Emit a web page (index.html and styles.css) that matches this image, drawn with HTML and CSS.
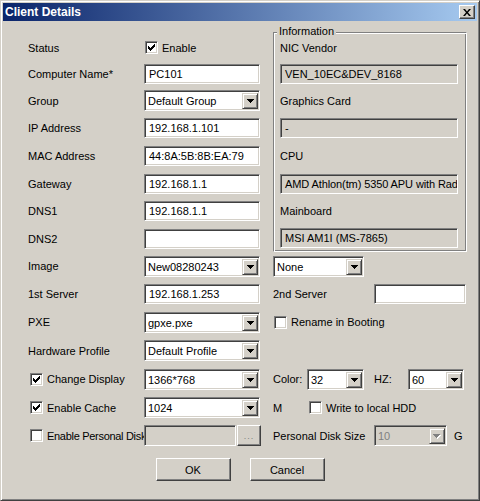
FILE: index.html
```html
<!DOCTYPE html>
<html>
<head>
<meta charset="utf-8">
<link rel="stylesheet" href="styles.css">
</head>
<body>
<div class="window">
  <div class="titlebar">
    <span class="title">Client Details</span>
    <span class="close"><svg width="8" height="7" viewBox="0 0 8 7"><path d="M0 0h2l2 2.5 2-2.5h2l-3 3.5 3 3.5h-2l-2-2.5-2 2.5h-2l3-3.5z" fill="#000"/></svg></span>
  </div>
  <div class="form">
    <!-- row 1 -->
    <div class="label">Status</div>
    <div class="check"><span class="cb on"></span>Enable</div>
    <div class="info">
      <span class="legend">Information</span>
      <div class="ilabel">NIC Vendor</div>
      <div class="field ro wide">VEN_10EC&amp;DEV_8168</div>
      <div class="ilabel">Graphics Card</div>
      <div class="field ro wide">-</div>
      <div class="ilabel">CPU</div>
      <div class="field ro wide tight">AMD Athlon(tm) 5350 APU with Rad</div>
      <div class="ilabel">Mainboard</div>
      <div class="field ro wide">MSI AM1I (MS-7865)</div>
    </div>
    <!-- row 2 -->
    <div class="label">Computer Name*</div>
    <div class="field">PC101</div>
    <!-- row 3 -->
    <div class="label">Group</div>
    <div class="select"><span class="val">Default Group</span><span class="btn"></span></div>
    <!-- row 4 -->
    <div class="label">IP Address</div>
    <div class="field">192.168.1.101</div>
    <!-- row 5 -->
    <div class="label">MAC Address</div>
    <div class="field">44:8A:5B:8B:EA:79</div>
    <!-- row 6 -->
    <div class="label">Gateway</div>
    <div class="field">192.168.1.1</div>
    <!-- row 7 -->
    <div class="label">DNS1</div>
    <div class="field">192.168.1.1</div>
    <!-- row 8 -->
    <div class="label">DNS2</div>
    <div class="field"></div>
    <!-- row 9 -->
    <div class="label">Image</div>
    <div class="select"><span class="val">New08280243</span><span class="btn"></span></div>
    <div class="right"><div class="select w91"><span class="val">None</span><span class="btn"></span></div></div>
    <!-- row 10 -->
    <div class="label">1st Server</div>
    <div class="field">192.168.1.253</div>
    <div class="right"><span class="rl w101">2nd Server</span><div class="field w92"></div></div>
    <!-- row 11 -->
    <div class="label">PXE</div>
    <div class="select"><span class="val">gpxe.pxe</span><span class="btn"></span></div>
    <div class="right"><div class="check"><span class="cb"></span>Rename in Booting</div></div>
    <!-- row 12 -->
    <div class="label">Hardware Profile</div>
    <div class="select"><span class="val">Default Profile</span><span class="btn"></span></div>
    <div class="right"></div>
    <!-- row 13 -->
    <div class="check lcheck"><span class="cb on"></span>Change Display</div>
    <div class="select"><span class="val">1366*768</span><span class="btn"></span></div>
    <div class="right">
      <span class="rl w34">Color:</span>
      <div class="select w57"><span class="val">32</span><span class="btn"></span></div>
      <span class="rl w44 hz">HZ:</span>
      <div class="select w56"><span class="val">60</span><span class="btn"></span></div>
    </div>
    <!-- row 14 -->
    <div class="check lcheck"><span class="cb on"></span>Enable Cache</div>
    <div class="select"><span class="val">1024</span><span class="btn"></span></div>
    <div class="right"><span class="rl w35">M</span><div class="check"><span class="cb"></span>Write to local HDD</div></div>
    <!-- row 15 -->
    <div class="check lcheck clip"><span class="cb"></span><span class="narrow">Enable Personal Disk</span></div>
    <div class="pdisk"><div class="field dis w92"></div><span class="dots">...</span></div>
    <div class="right">
      <span class="rl w101">Personal Disk Size</span>
      <div class="select dis w73"><span class="val">10</span><span class="btn"></span></div>
      <span class="rl g">G</span>
    </div>
  </div>
  <div class="buttons">
    <span class="button">OK</span>
    <span class="button">Cancel</span>
  </div>
</div>
</body>
</html>
```

FILE: styles.css
```css
* { box-sizing: border-box; }
html, body { margin: 0; padding: 0; }
body {
  width: 480px;
  height: 501px;
  overflow: hidden;
  background: #d4d0c8;
  font-family: "Liberation Sans", Arial, sans-serif;
  font-size: 11px;
  color: #000;
}
.window {
  width: 480px;
  height: 501px;
  background: #d4d0c8;
  border: 1px solid;
  border-color: #d4d0c8 #404040 #404040 #d4d0c8;
  box-shadow: inset 1px 1px #fff, inset -1px -1px #808080;
  padding: 2px;
  display: flex;
  flex-direction: column;
}
.titlebar {
  height: 18px;
  flex: none;
  background: linear-gradient(to right, #0a246a, #a6caf0);
  display: flex;
  align-items: center;
  justify-content: space-between;
  padding: 0 2px;
}
.title {
  color: #fff;
  font-weight: bold;
  font-size: 12px;
}
.close {
  width: 16px;
  height: 14px;
  background: #d4d0c8;
  border: 1px solid;
  border-color: #fff #404040 #404040 #fff;
  box-shadow: inset -1px -1px #808080;
  display: flex;
  align-items: center;
  justify-content: center;
}
.close svg { display: block; }

.form {
  margin: 13px 0 0 25px;
  display: grid;
  grid-template-columns: 116px 129px 194px;
  grid-template-rows: 27px 26px 27px 28px 28px 27px 28px 27px 28px 28px 28px 29px 28px 29px 27px;
  align-items: center;
}
.label { white-space: nowrap; }

.field {
  width: 116px;
  height: 20px;
  background: #fff;
  border: 1px solid;
  border-color: #808080 #fff #fff #808080;
  box-shadow: inset 1px 1px #404040, inset -1px -1px #d4d0c8;
  padding: 0 3px 0 4px;
  display: flex;
  align-items: center;
  white-space: nowrap;
  overflow: hidden;
}
.field.ro, .field.dis { background: #d4d0c8; }
.field.wide { width: 178px; }
.field.tight { letter-spacing: -0.1px; padding-right: 0; }

.select {
  width: 116px;
  height: 21px;
  background: #fff;
  border: 1px solid;
  border-color: #808080 #fff #fff #808080;
  box-shadow: inset 1px 1px #404040, inset -1px -1px #d4d0c8;
  padding: 2px 1px 1px 2px;
  display: flex;
  align-items: stretch;
}
.select .val {
  flex: 1;
  display: flex;
  align-items: center;
  padding-left: 1px;
  white-space: nowrap;
  overflow: hidden;
}
.select .btn {
  width: 16px;
  flex: none;
  background: #d4d0c8 url("data:image/svg+xml,%3Csvg xmlns='http://www.w3.org/2000/svg' width='7' height='4'%3E%3Cpath d='M0 0h7v1h-1v1h-1v1h-1v1h-1v-1h-1v-1h-1v-1h-1z' fill='%23000'/%3E%3C/svg%3E") center no-repeat;
  border: 1px solid;
  border-color: #d4d0c8 #404040 #404040 #d4d0c8;
  box-shadow: inset 1px 1px #fff, inset -1px -1px #808080;
}
.select.dis { background: #d4d0c8; }
.select.dis .val { color: #808080; }
.select.dis .btn {
  background-image: url("data:image/svg+xml,%3Csvg xmlns='http://www.w3.org/2000/svg' width='8' height='5'%3E%3Cpath d='M1 1h7v1h-1v1h-1v1h-1v1h-1v-1h-1v-1h-1v-1h-1z' fill='%23fff'/%3E%3Cpath d='M0 0h7v1h-1v1h-1v1h-1v1h-1v-1h-1v-1h-1v-1h-1z' fill='%23808080'/%3E%3C/svg%3E");
}

.w91 { width: 91px; }
.w92 { width: 92px; }
.w57 { width: 57px; }
.w56 { width: 56px; }
.w73 { width: 73px; }

.check {
  display: flex;
  align-items: center;
  white-space: nowrap;
  padding-left: 1px;
}
.check .cb { margin-right: 4px; }
.lcheck { padding-left: 2px; }
.clip { overflow: hidden; height: 20px; }
.narrow { letter-spacing: -0.3px; }
.cb {
  width: 13px;
  height: 13px;
  flex: none;
  background: #fff;
  border: 1px solid;
  border-color: #808080 #fff #fff #808080;
  box-shadow: inset 1px 1px #404040, inset -1px -1px #d4d0c8;
}
.cb.on {
  background: #fff url("data:image/svg+xml,%3Csvg xmlns='http://www.w3.org/2000/svg' width='7' height='7'%3E%3Cpath d='M0 2h1v1h1v1h1v-1h1v-1h1v-1h1v-1h1v3h-1v1h-1v1h-1v1h-1v1h-1v-1h-1v-1h-1v-1h-1z' fill='%23000'/%3E%3C/svg%3E") 2px 2px no-repeat;
}

.info {
  grid-column: 3;
  grid-row: 1 / 9;
  align-self: stretch;
  margin-top: -2px;
  position: relative;
  border: 1px solid;
  border-color: #808080 #fff #fff #808080;
  box-shadow: inset 1px 1px #fff, inset -1px -1px #808080;
  padding: 1px 6px 1px 6px;
  display: grid;
  grid-template-rows: 27px 26px 27px 28px 28px 27px 28px 25px;
  align-items: center;
}
.legend {
  position: absolute;
  top: -8px;
  left: 3px;
  padding: 0 2px;
  line-height: 13px;
  background: #d4d0c8;
}
.ilabel { white-space: nowrap; }

.right {
  grid-column: 3;
  display: flex;
  align-items: center;
  white-space: nowrap;
}
.rl { flex: none; }
.w101 { width: 101px; }
.w34 { width: 34px; }
.w35 { width: 35px; }
.w44 { width: 44px; }
.hz { padding-left: 10px; }
.g { margin-left: 7px; }

.pdisk {
  display: flex;
  align-items: center;
  height: 21px;
}
.pdisk .field { height: 21px; }
.dots {
  width: 24px;
  height: 21px;
  margin-left: 1px;
  background: #d4d0c8;
  border: 1px solid;
  border-color: #fff #404040 #404040 #fff;
  box-shadow: inset -1px -1px #808080;
  color: #808080;
  font-size: 9px;
  display: flex;
  align-items: center;
  justify-content: center;
  letter-spacing: 1px;
}

.buttons {
  margin-top: 9px;
  display: flex;
  justify-content: center;
  gap: 19px;
}
.button {
  width: 75px;
  height: 23px;
  background: #d4d0c8;
  border: 1px solid;
  border-color: #fff #404040 #404040 #fff;
  box-shadow: inset -1px -1px #808080;
  display: flex;
  align-items: center;
  justify-content: center;
}
```
